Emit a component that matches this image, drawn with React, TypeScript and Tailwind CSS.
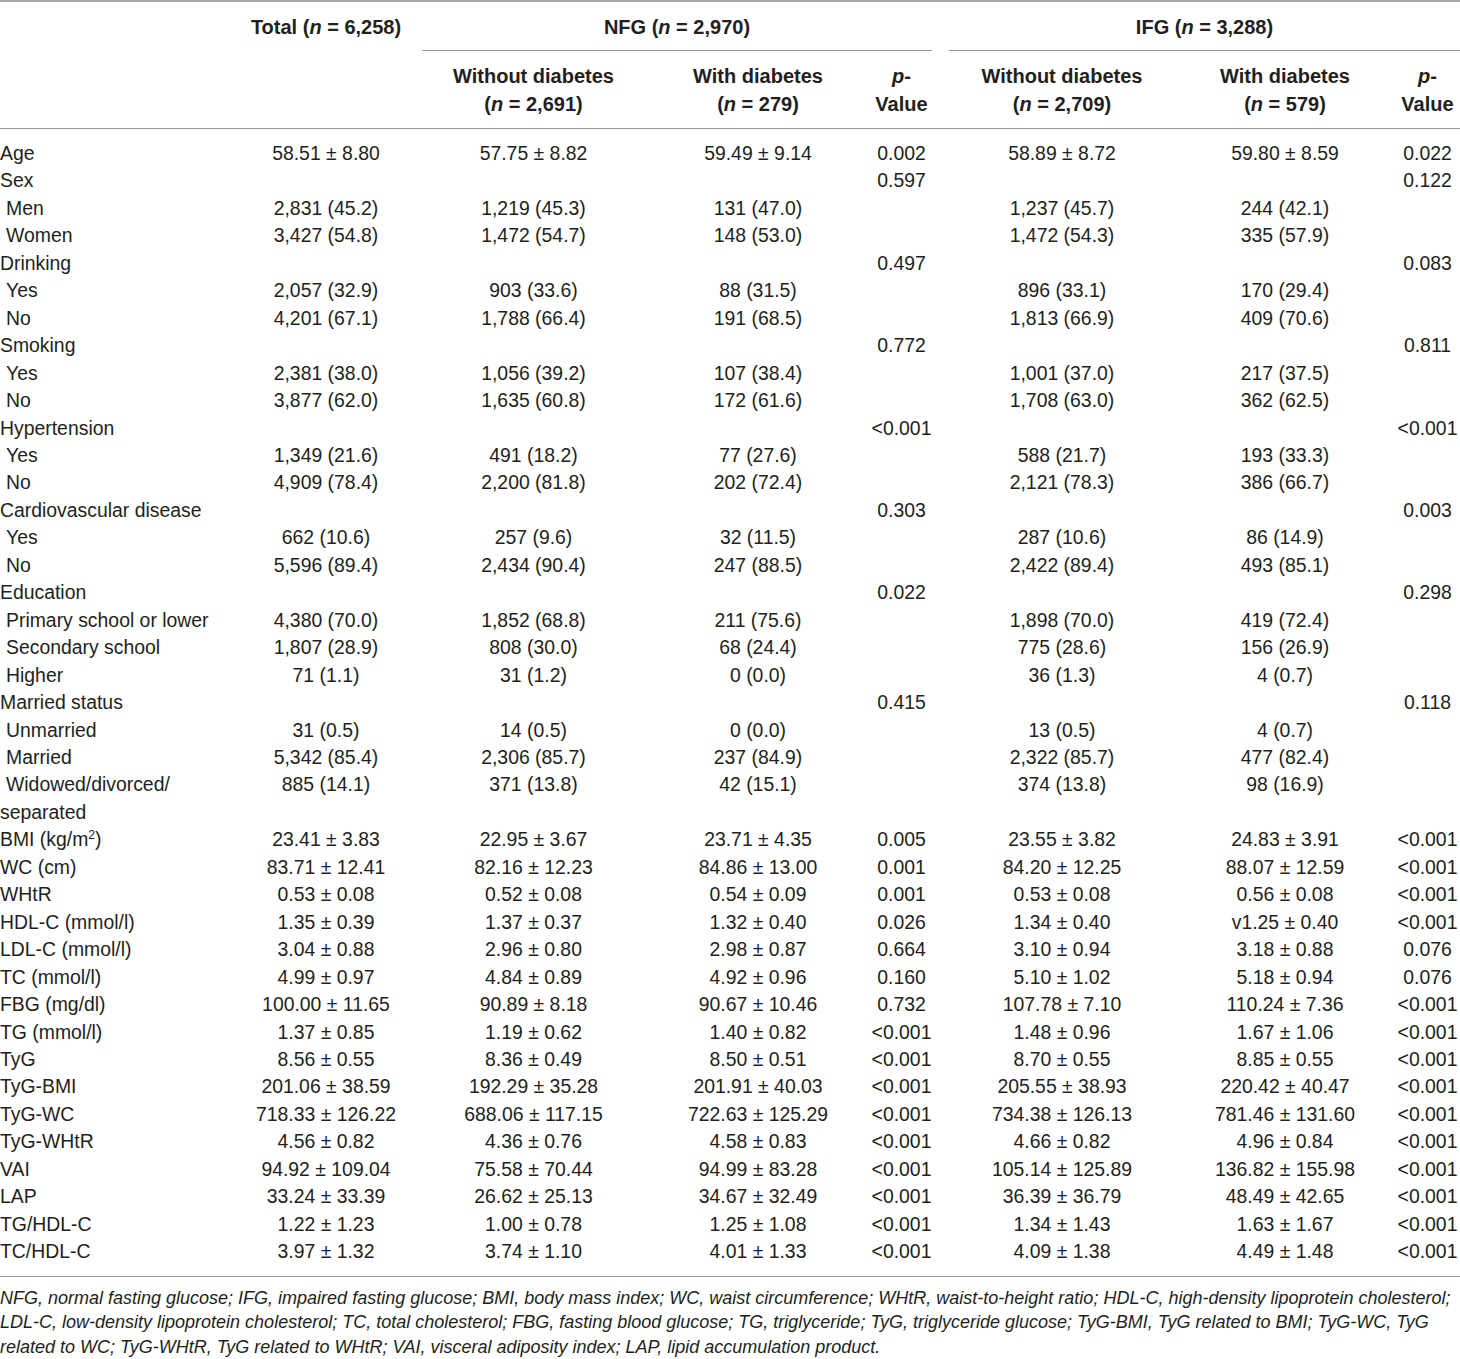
import React from "react";

type Row = {
    label: string;
    sub?: boolean;
    cells: string[]; // total, nfgWithout, nfgWith, nfgP, ifgWithout, ifgWith, ifgP
};

const rows: Row[] = [
    { label: 'Age', cells: ['58.51 ± 8.80', '57.75 ± 8.82', '59.49 ± 9.14', '0.002', '58.89 ± 8.72', '59.80 ± 8.59', '0.022'] },
    { label: 'Sex', cells: ['', '', '', '0.597', '', '', '0.122'] },
    { label: 'Men', sub: true, cells: ['2,831 (45.2)', '1,219 (45.3)', '131 (47.0)', '', '1,237 (45.7)', '244 (42.1)', ''] },
    { label: 'Women', sub: true, cells: ['3,427 (54.8)', '1,472 (54.7)', '148 (53.0)', '', '1,472 (54.3)', '335 (57.9)', ''] },
    { label: 'Drinking', cells: ['', '', '', '0.497', '', '', '0.083'] },
    { label: 'Yes', sub: true, cells: ['2,057 (32.9)', '903 (33.6)', '88 (31.5)', '', '896 (33.1)', '170 (29.4)', ''] },
    { label: 'No', sub: true, cells: ['4,201 (67.1)', '1,788 (66.4)', '191 (68.5)', '', '1,813 (66.9)', '409 (70.6)', ''] },
    { label: 'Smoking', cells: ['', '', '', '0.772', '', '', '0.811'] },
    { label: 'Yes', sub: true, cells: ['2,381 (38.0)', '1,056 (39.2)', '107 (38.4)', '', '1,001 (37.0)', '217 (37.5)', ''] },
    { label: 'No', sub: true, cells: ['3,877 (62.0)', '1,635 (60.8)', '172 (61.6)', '', '1,708 (63.0)', '362 (62.5)', ''] },
    { label: 'Hypertension', cells: ['', '', '', '<0.001', '', '', '<0.001'] },
    { label: 'Yes', sub: true, cells: ['1,349 (21.6)', '491 (18.2)', '77 (27.6)', '', '588 (21.7)', '193 (33.3)', ''] },
    { label: 'No', sub: true, cells: ['4,909 (78.4)', '2,200 (81.8)', '202 (72.4)', '', '2,121 (78.3)', '386 (66.7)', ''] },
    { label: 'Cardiovascular disease', cells: ['', '', '', '0.303', '', '', '0.003'] },
    { label: 'Yes', sub: true, cells: ['662 (10.6)', '257 (9.6)', '32 (11.5)', '', '287 (10.6)', '86 (14.9)', ''] },
    { label: 'No', sub: true, cells: ['5,596 (89.4)', '2,434 (90.4)', '247 (88.5)', '', '2,422 (89.4)', '493 (85.1)', ''] },
    { label: 'Education', cells: ['', '', '', '0.022', '', '', '0.298'] },
    { label: 'Primary school or lower', sub: true, cells: ['4,380 (70.0)', '1,852 (68.8)', '211 (75.6)', '', '1,898 (70.0)', '419 (72.4)', ''] },
    { label: 'Secondary school', sub: true, cells: ['1,807 (28.9)', '808 (30.0)', '68 (24.4)', '', '775 (28.6)', '156 (26.9)', ''] },
    { label: 'Higher', sub: true, cells: ['71 (1.1)', '31 (1.2)', '0 (0.0)', '', '36 (1.3)', '4 (0.7)', ''] },
    { label: 'Married status', cells: ['', '', '', '0.415', '', '', '0.118'] },
    { label: 'Unmarried', sub: true, cells: ['31 (0.5)', '14 (0.5)', '0 (0.0)', '', '13 (0.5)', '4 (0.7)', ''] },
    { label: 'Married', sub: true, cells: ['5,342 (85.4)', '2,306 (85.7)', '237 (84.9)', '', '2,322 (85.7)', '477 (82.4)', ''] },
    { label: 'Widowed/divorced/\nseparated', sub: true, cells: ['885 (14.1)', '371 (13.8)', '42 (15.1)', '', '374 (13.8)', '98 (16.9)', ''] },
    { label: 'BMI', cells: ['23.41 ± 3.83', '22.95 ± 3.67', '23.71 ± 4.35', '0.005', '23.55 ± 3.82', '24.83 ± 3.91', '<0.001'] },
    { label: 'WC (cm)', cells: ['83.71 ± 12.41', '82.16 ± 12.23', '84.86 ± 13.00', '0.001', '84.20 ± 12.25', '88.07 ± 12.59', '<0.001'] },
    { label: 'WHtR', cells: ['0.53 ± 0.08', '0.52 ± 0.08', '0.54 ± 0.09', '0.001', '0.53 ± 0.08', '0.56 ± 0.08', '<0.001'] },
    { label: 'HDL-C (mmol/l)', cells: ['1.35 ± 0.39', '1.37 ± 0.37', '1.32 ± 0.40', '0.026', '1.34 ± 0.40', 'v1.25 ± 0.40', '<0.001'] },
    { label: 'LDL-C (mmol/l)', cells: ['3.04 ± 0.88', '2.96 ± 0.80', '2.98 ± 0.87', '0.664', '3.10 ± 0.94', '3.18 ± 0.88', '0.076'] },
    { label: 'TC (mmol/l)', cells: ['4.99 ± 0.97', '4.84 ± 0.89', '4.92 ± 0.96', '0.160', '5.10 ± 1.02', '5.18 ± 0.94', '0.076'] },
    { label: 'FBG (mg/dl)', cells: ['100.00 ± 11.65', '90.89 ± 8.18', '90.67 ± 10.46', '0.732', '107.78 ± 7.10', '110.24 ± 7.36', '<0.001'] },
    { label: 'TG (mmol/l)', cells: ['1.37 ± 0.85', '1.19 ± 0.62', '1.40 ± 0.82', '<0.001', '1.48 ± 0.96', '1.67 ± 1.06', '<0.001'] },
    { label: 'TyG', cells: ['8.56 ± 0.55', '8.36 ± 0.49', '8.50 ± 0.51', '<0.001', '8.70 ± 0.55', '8.85 ± 0.55', '<0.001'] },
    { label: 'TyG-BMI', cells: ['201.06 ± 38.59', '192.29 ± 35.28', '201.91 ± 40.03', '<0.001', '205.55 ± 38.93', '220.42 ± 40.47', '<0.001'] },
    { label: 'TyG-WC', cells: ['718.33 ± 126.22', '688.06 ± 117.15', '722.63 ± 125.29', '<0.001', '734.38 ± 126.13', '781.46 ± 131.60', '<0.001'] },
    { label: 'TyG-WHtR', cells: ['4.56 ± 0.82', '4.36 ± 0.76', '4.58 ± 0.83', '<0.001', '4.66 ± 0.82', '4.96 ± 0.84', '<0.001'] },
    { label: 'VAI', cells: ['94.92 ± 109.04', '75.58 ± 70.44', '94.99 ± 83.28', '<0.001', '105.14 ± 125.89', '136.82 ± 155.98', '<0.001'] },
    { label: 'LAP', cells: ['33.24 ± 33.39', '26.62 ± 25.13', '34.67 ± 32.49', '<0.001', '36.39 ± 36.79', '48.49 ± 42.65', '<0.001'] },
    { label: 'TG/HDL-C', cells: ['1.22 ± 1.23', '1.00 ± 0.78', '1.25 ± 1.08', '<0.001', '1.34 ± 1.43', '1.63 ± 1.67', '<0.001'] },
    { label: 'TC/HDL-C', cells: ['3.97 ± 1.32', '3.74 ± 1.10', '4.01 ± 1.33', '<0.001', '4.09 ± 1.38', '4.49 ± 1.48', '<0.001'] },
];

// label | total | nfg without | nfg with | nfg p | gap | ifg without | ifg with | ifg p
const gridCols = "grid grid-cols-[230px_192px_223px_226px_61px_17px_226px_220px_65px]";

function Label({ row }: { row: Row }) {
    const parts = row.label.split('\n');
    return (
        <div className={row.sub ? "indent-[6px]" : ""}>
            {row.label === 'BMI' ? (
                <>BMI (kg/m<sup className="text-[12px] relative -top-[7px] align-baseline">2</sup>)</>
            ) : (
                parts.map((p, i) => (
                    <React.Fragment key={i}>
                        {i > 0 && <br />}
                        {p}
                    </React.Fragment>
                ))
            )}
        </div>
    );
}

function N() {
    return <span className="italic">n</span>;
}

export default function App() {
    return (
        <div className="w-[1460px] bg-white text-[#231f20] font-['Liberation_Sans',Arial,sans-serif] text-[19.4px] leading-[27.45px]">
            {/* header */}
            <div className="border-t-2 border-[#a8a8a8] text-[20px] font-bold">
                <div className={gridCols}>
                    <div />
                    <div className="text-center pt-[11px] pb-[9px] leading-[28px]">
                        Total (<N /> = 6,258)
                    </div>
                    <div className="col-span-3 text-center pt-[11px] pb-[9px] leading-[28px] border-b border-[#9a9a9a]">
                        NFG (<N /> = 2,970)
                    </div>
                    <div />
                    <div className="col-span-3 text-center pt-[11px] pb-[9px] leading-[28px] border-b border-[#9a9a9a]">
                        IFG (<N /> = 3,288)
                    </div>
                </div>
                <div className={`${gridCols} leading-[28px] pt-[11px] pb-[10px] border-b border-[#9a9a9a]`}>
                    <div />
                    <div />
                    <div className="text-center">Without diabetes<br />(<N /> = 2,691)</div>
                    <div className="text-center">With diabetes<br />(<N /> = 279)</div>
                    <div className="text-center"><span className="italic">p</span>-<br />Value</div>
                    <div />
                    <div className="text-center">Without diabetes<br />(<N /> = 2,709)</div>
                    <div className="text-center">With diabetes<br />(<N /> = 579)</div>
                    <div className="text-center"><span className="italic">p</span>-<br />Value</div>
                </div>
            </div>

            {/* body */}
            <div className="pt-[11px] pb-[10px] border-b border-[#9a9a9a]">
                {rows.map((row, i) => (
                    <div key={i} className={gridCols}>
                        <Label row={row} />
                        <div className="text-center">{row.cells[0]}</div>
                        <div className="text-center">{row.cells[1]}</div>
                        <div className="text-center">{row.cells[2]}</div>
                        <div className="text-center">{row.cells[3]}</div>
                        <div />
                        <div className="text-center">{row.cells[4]}</div>
                        <div className="text-center">{row.cells[5]}</div>
                        <div className="text-center">{row.cells[6]}</div>
                    </div>
                ))}
            </div>

            {/* footnote */}
            <p className="pt-[9px] pb-[2px] italic text-[18px] leading-[24.5px]">
                NFG, normal fasting glucose; IFG, impaired fasting glucose; BMI, body mass index; WC, waist circumference; WHtR, waist-to-height ratio; HDL-C, high-density lipoprotein cholesterol; LDL-C, low-density lipoprotein cholesterol; TC, total cholesterol; FBG, fasting blood glucose; TG, triglyceride; TyG, triglyceride glucose; TyG-BMI, TyG related to BMI; TyG-WC, TyG related to WC; TyG-WHtR, TyG related to WHtR; VAI, visceral adiposity index; LAP, lipid accumulation product.
            </p>
        </div>
    );
}
